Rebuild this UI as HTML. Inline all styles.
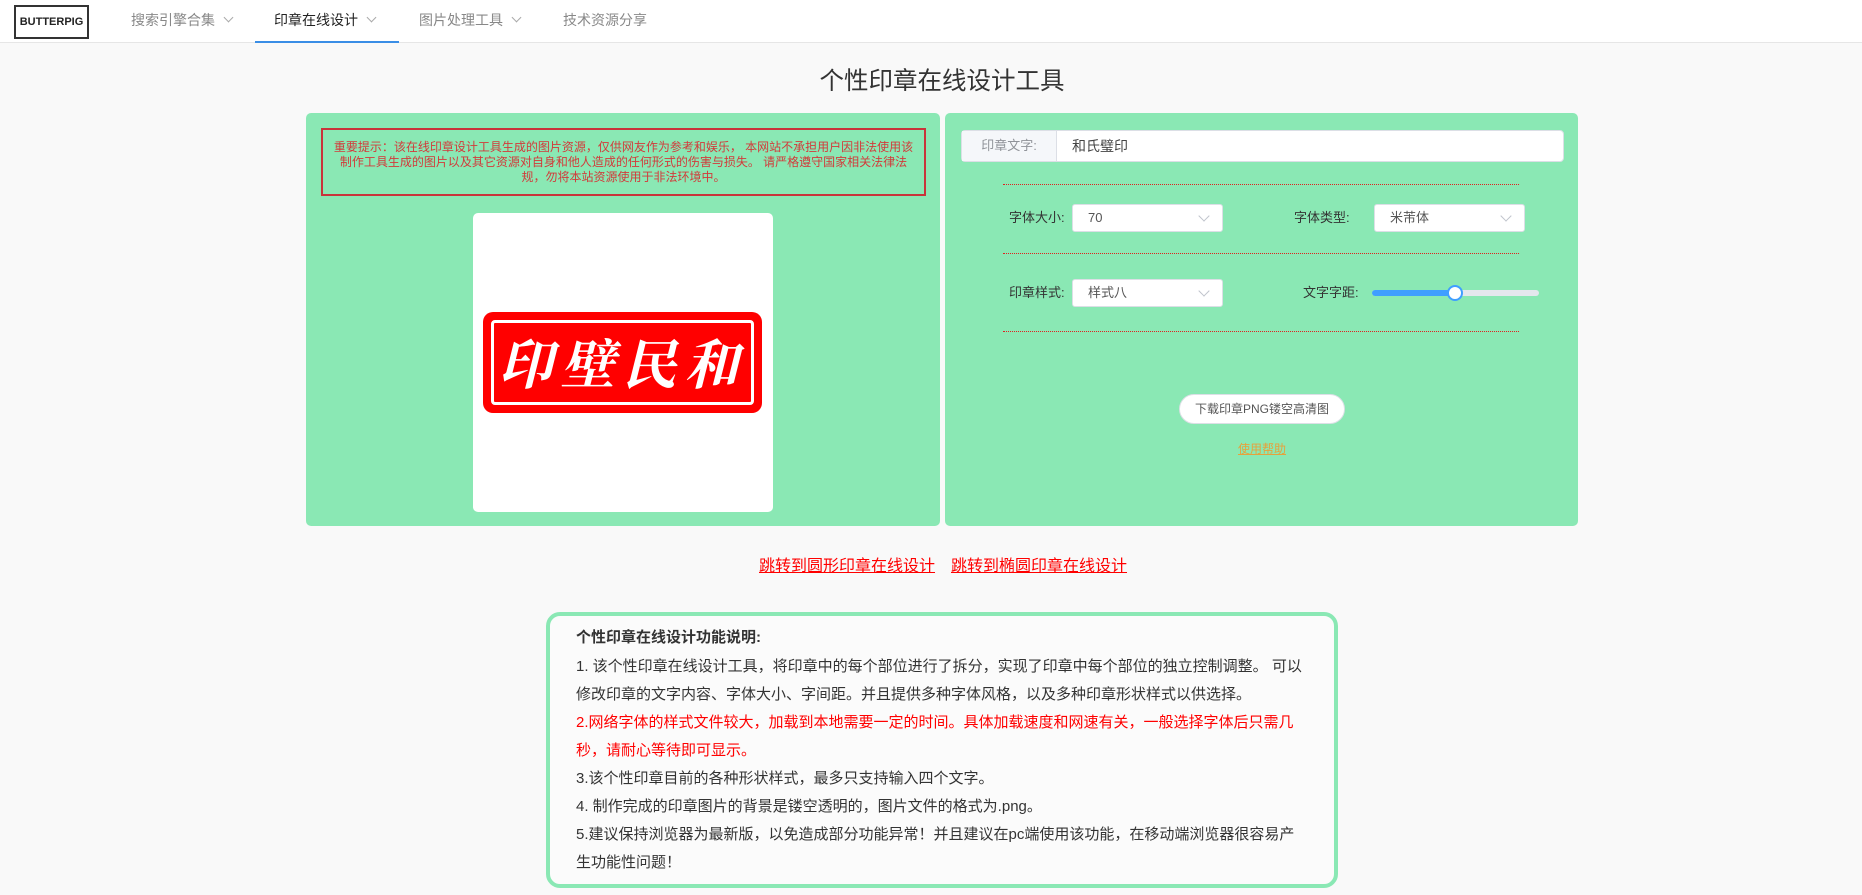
<!DOCTYPE html>
<html><head><meta charset="utf-8"><style>
*{margin:0;padding:0;box-sizing:border-box}
body{width:1862px;height:895px;overflow:hidden;background:#f9f9f9;font-family:"Liberation Sans","Noto Sans CJK SC",sans-serif;color:#333;position:relative}
.abs{position:absolute}
.nav{left:0;top:0;width:1862px;height:43px;background:#fff;border-bottom:1px solid #e6e6e6}
.logo{left:14px;top:5px;width:75px;height:34px;border:2px solid #333;font:bold 11px "Liberation Sans",sans-serif;color:#222;text-align:center;line-height:30px;letter-spacing:0}
.ni{top:0;height:43px;line-height:40px;font-size:14px;color:#888;white-space:nowrap}
.ni .c{display:inline-block;width:7px;height:7px;border-right:1px solid #aaa;border-bottom:1px solid #aaa;transform:rotate(45deg);margin-left:10px;position:relative;top:-4px}
.title{left:0;width:1862px;padding-left:22px;top:62px;text-align:center;font-size:24.5px;color:#333}
.panel{background:#8ae8b4;border-radius:5px}
.warn{left:321px;top:128px;width:605px;height:68px;border:2px solid #c9343a;color:#d23a3a;font-size:12px;line-height:15px;text-align:center;padding:10px 8px 0}
.card{left:473px;top:213px;width:300px;height:299px;background:#fff;border-radius:5px}
.stamp{left:483px;top:312px;width:279px;height:101px;background:#f00;border-radius:10px}
.stamp .in{position:absolute;left:8px;top:8px;right:8px;bottom:8px;border:3px solid #fff;border-radius:4px;color:#fff;font:italic bold 54px "Noto Serif CJK SC",serif;text-align:center;line-height:78px;letter-spacing:8px;white-space:nowrap}
.inp{left:961px;top:130px;width:603px;height:32px;background:#fff;border:1px solid #dcdfe6;border-radius:4px;font-size:14px}
.inp .l{position:absolute;left:0;top:0;width:95px;height:30px;background:#f5f7fa;border-right:1px solid #dcdfe6;color:#909399;line-height:30px;text-align:center;font-size:13px}
.inp .v{position:absolute;left:110px;top:0;line-height:30px;color:#444}
.dl{left:1003px;width:516px;border-top:1px dotted #e02020}
.lb{font-size:13px;color:#333;line-height:28px;white-space:nowrap}
.sel{width:151px;height:28px;background:#fff;border:1px solid #dcdfe6;border-radius:3px;font-size:13px;color:#555;line-height:26px;padding-left:15px}
.sel:after{content:"";position:absolute;right:14px;top:7px;width:7px;height:7px;border-right:1px solid #c0c4cc;border-bottom:1px solid #c0c4cc;transform:rotate(45deg)}
.btn{left:1179px;top:394px;width:166px;height:30px;border:1px solid #dcdfe6;background:#fff;border-radius:15px;font-size:12px;color:#555;text-align:center;line-height:28px}
.link{top:552px;font-size:16px;color:#f00;text-decoration:underline;white-space:nowrap}
.desc{left:546px;top:612px;width:792px;height:276px;border:4px solid #8ae8b4;border-radius:14px;background:#fbfbfb}
.dt{left:576px;font-size:15px;color:#333;white-space:nowrap;line-height:20px}
</style></head><body>
<div class="abs nav"></div>
<div class="abs logo">BUTTERPIG</div>
<div class="abs ni" style="left:131px">搜索引擎合集<span class="c"></span></div>
<div class="abs ni" style="left:274px;color:#222">印章在线设计<span class="c"></span></div>
<div class="abs" style="left:255px;top:41px;width:144px;height:2px;background:#3a8ee6"></div>
<div class="abs ni" style="left:419px">图片处理工具<span class="c"></span></div>
<div class="abs ni" style="left:563px">技术资源分享</div>

<div class="abs title">个性印章在线设计工具</div>

<div class="abs panel" style="left:306px;top:113px;width:634px;height:413px"></div>
<div class="abs panel" style="left:945px;top:113px;width:633px;height:413px"></div>

<div class="abs warn">重要提示：该在线印章设计工具生成的图片资源，仅供网友作为参考和娱乐， 本网站不承担用户因非法使用该制作工具生成的图片以及其它资源对自身和他人造成的任何形式的伤害与损失。 请严格遵守国家相关法律法规，勿将本站资源使用于非法环境中。</div>
<div class="abs card"></div>
<div class="abs stamp"><div class="in">印壁民和</div></div>

<div class="abs inp"><div class="l">印章文字:</div><div class="v">和氏璧印</div></div>
<div class="abs dl" style="top:184px"></div>
<div class="abs lb" style="left:1009px;top:204px">字体大小:</div>
<div class="abs sel" style="left:1072px;top:204px">70</div>
<div class="abs lb" style="left:1294px;top:204px">字体类型:</div>
<div class="abs sel" style="left:1374px;top:204px">米芾体</div>
<div class="abs dl" style="top:253px"></div>
<div class="abs lb" style="left:1009px;top:279px">印章样式:</div>
<div class="abs sel" style="left:1072px;top:279px">样式八</div>
<div class="abs lb" style="left:1303px;top:279px">文字字距:</div>
<div class="abs" style="left:1372px;top:290px;width:167px;height:6px;background:#e4e7ed;border-radius:3px"></div>
<div class="abs" style="left:1372px;top:290px;width:83px;height:6px;background:#409eff;border-radius:3px"></div>
<div class="abs" style="left:1447px;top:285px;width:16px;height:16px;background:#fff;border:2px solid #409eff;border-radius:50%"></div>
<div class="abs dl" style="top:331px"></div>
<div class="abs btn">下载印章PNG镂空高清图</div>
<div class="abs" style="left:1238px;top:440px;font-size:12px;color:#e6a23c;text-decoration:underline">使用帮助</div>

<div class="abs link" style="left:759px">跳转到圆形印章在线设计</div>
<div class="abs link" style="left:951px">跳转到椭圆印章在线设计</div>

<div class="abs desc"></div>
<div class="abs dt" style="top:628px;font-weight:bold">个性印章在线设计功能说明:</div>
<div class="abs dt" style="top:657px">1. 该个性印章在线设计工具，将印章中的每个部位进行了拆分，实现了印章中每个部位的独立控制调整。 可以</div>
<div class="abs dt" style="top:685px">修改印章的文字内容、字体大小、字间距。并且提供多种字体风格，以及多种印章形状样式以供选择。</div>
<div class="abs dt" style="top:713px;color:#f00">2.网络字体的样式文件较大，加载到本地需要一定的时间。具体加载速度和网速有关，一般选择字体后只需几</div>
<div class="abs dt" style="top:741px;color:#f00">秒，请耐心等待即可显示。</div>
<div class="abs dt" style="top:769px">3.该个性印章目前的各种形状样式，最多只支持输入四个文字。</div>
<div class="abs dt" style="top:797px">4. 制作完成的印章图片的背景是镂空透明的，图片文件的格式为.png。</div>
<div class="abs dt" style="top:825px">5.建议保持浏览器为最新版，以免造成部分功能异常！并且建议在pc端使用该功能，在移动端浏览器很容易产</div>
<div class="abs dt" style="top:853px">生功能性问题！</div>
</body></html>
